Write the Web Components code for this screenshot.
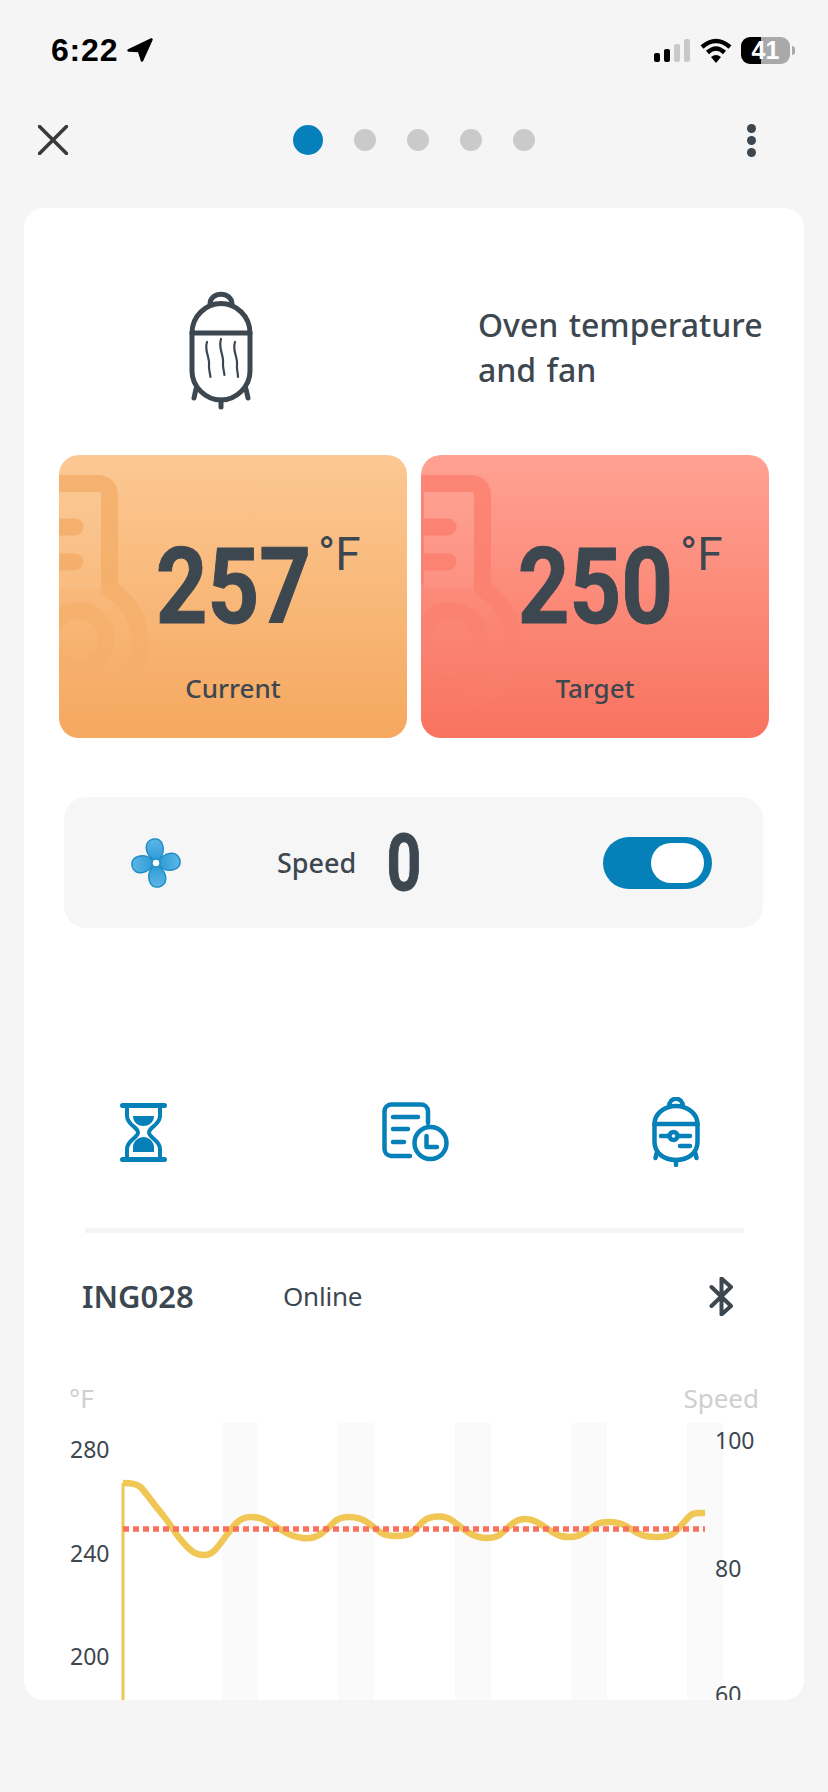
<!DOCTYPE html>
<html lang="en">
<head>
<meta charset="utf-8">
<title>Oven temperature and fan</title>
<style>
    html, body { margin: 0; padding: 0; background: #f5f5f5; }
    body { width: 828px; height: 1792px; overflow: hidden; font-family: "Noto Sans", "Liberation Sans", sans-serif; color: #3d4750; }
</style>
</head>
<body>
<status-bar></status-bar>
<top-nav></top-nav>
<oven-card>
    <oven-summary>Oven temperature and fan</oven-summary>
    <temp-row>
        <temp-tile value="257" tone="orange">Current</temp-tile>
        <temp-tile value="250" tone="red">Target</temp-tile>
    </temp-row>
    <fan-panel speed="0"></fan-panel>
    <action-icons></action-icons>
    <device-row name="ING028" state="Online"></device-row>
    <temp-chart></temp-chart>
</oven-card>

<script>
class StatusBar extends HTMLElement {
    constructor() {
        super();
        this.shadowDOM = this.attachShadow({mode: "open"});
    }

    connectedCallback() {
        this.shadowDOM.innerHTML = `
            <style>
                :host {
                    display: flex;
                    align-items: center;
                    height: 100px;
                    padding: 0 33px 0 51px;
                    box-sizing: border-box;
                    color: #000;
                }
                .time {
                    font: 700 32px/1 "Liberation Sans", sans-serif;
                    margin-right: 9px;
                    letter-spacing: 0.8px;
                }
                .right {
                    margin-left: auto;
                    display: flex;
                    align-items: center;
                }
                .signal { display: flex; align-items: flex-end; gap: 3.5px; height: 24px; margin-right: 10px; }
                .signal i { display: block; width: 6.5px; border-radius: 2px; background: #c9c9c9; }
                .signal i:nth-child(1) { height: 9px; background: #000; }
                .signal i:nth-child(2) { height: 13px; background: #000; }
                .signal i:nth-child(3) { height: 18px; }
                .signal i:nth-child(4) { height: 23px; }
                .battery {
                    width: 49px;
                    height: 27px;
                    margin-left: 9px;
                    border-radius: 9px;
                    background: linear-gradient(90deg, #000 41%, #a9a9a9 41%);
                    color: #fff;
                    font: 700 25px/27px "Liberation Sans", sans-serif;
                    text-align: center;
                }
                .nub { width: 3px; height: 9px; margin-left: 2px; border-radius: 0 3px 3px 0; background: #a9a9a9; }
                svg { display: block; }
            </style>
            <span class="time">6:22</span>
            <svg width="26" height="24" viewBox="0 0 26 24"><path d="M1.500 12.500 L24.500 1.500 L15 22.500 L12 13 Z" fill="#000" stroke="#000" stroke-width="2.500" stroke-linejoin="round"/></svg>
            <div class="right">
                <div class="signal"><i></i><i></i><i></i><i></i></div>
                <svg width="32" height="25" viewBox="0 0 32 25">
                    <path d="M2 9 Q16 -3 30 9" fill="none" stroke="#000" stroke-width="4.500"/>
                    <path d="M7.500 14.500 Q16 6.500 24.500 14.500" fill="none" stroke="#000" stroke-width="4.500"/>
                    <path d="M11 19 L16 25 L21 19 Q16 15 11 19 Z" fill="#000"/>
                </svg>
                <div class="battery">41</div>
                <div class="nub"></div>
            </div>
        `;
    }
}

class TopNav extends HTMLElement {
    constructor() {
        super();
        this.shadowDOM = this.attachShadow({mode: "open"});
    }

    connectedCallback() {
        this.shadowDOM.innerHTML = `
            <style>
                :host {
                    display: flex;
                    align-items: center;
                    height: 80px;
                    padding-left: 38px;
                    margin-bottom: 28px;
                    box-sizing: border-box;
                }
                svg { display: block; }
                .dots { display: flex; align-items: center; gap: 31px; margin-left: 225px; }
                .dots i { display: block; width: 22px; height: 22px; border-radius: 50%; background: #cacaca; }
                .dots i.on { width: 30px; height: 30px; background: #0580bb; }
                .more { display: flex; flex-direction: column; gap: 3px; margin-left: 212px; }
                .more i { display: block; width: 9px; height: 9px; border-radius: 50%; background: #3d4750; }
            </style>
            <svg width="30" height="30" viewBox="0 0 30 30"><path d="M1.500 1.500 L28.500 28.500 M28.500 1.500 L1.500 28.500" stroke="#3a3a3a" stroke-width="3.600" stroke-linecap="round"/></svg>
            <div class="dots"><i class="on"></i><i></i><i></i><i></i><i></i></div>
            <div class="more"><i></i><i></i><i></i></div>
        `;
    }
}

class OvenCard extends HTMLElement {
    constructor() {
        super();
        this.shadowDOM = this.attachShadow({mode: "open"});
    }

    connectedCallback() {
        this.shadowDOM.innerHTML = `
            <style>
                :host {
                    display: block;
                    height: 1492px;
                    margin: 0 24px;
                    background: #fff;
                    border-radius: 20px;
                    overflow: hidden;
                }
            </style>
            <slot></slot>
        `;
    }
}

class OvenSummary extends HTMLElement {
    constructor() {
        super();
        this.shadowDOM = this.attachShadow({mode: "open"});
    }

    connectedCallback() {
        this.shadowDOM.innerHTML = `
            <style>
                :host {
                    display: flex;
                    height: 247px;
                    box-sizing: border-box;
                    padding: 81px 0 0 164px;
                }
                svg { display: block; flex: none; }
                .title {
                    width: 310px;
                    margin: 13px 0 0 224px;
                    font: 500 32px/45px "Noto Sans", sans-serif;
                    word-spacing: 2px;
                    color: #3d4750;
                }
            </style>
            <svg width="66" height="121" viewBox="0 0 66 121" fill="none" stroke="#3d4750" stroke-width="5" stroke-linecap="round" stroke-linejoin="round">
                <path d="M22 15 C22 2 44 2 44 15"/>
                <path d="M4 44 C4 27 18 14.500 33 14.500 S62 27 62 44 V82 C62 98 48 111 33 111 S4 98 4 82 Z"/>
                <path d="M4 44 H62"/>
                <path d="M8 100 L6 109 M33 111 V118 M58 100 L60 109"/>
                <path d="M19 53 C16 62 22 68 21 76 C20.500 80 22 84 22.500 88 M33 50 C30 60 36 66 35 74 C34.500 78 36 82 36.500 86 M47 53 C44 62 50 68 49 76 C48.500 80 50 84 50 88" stroke-width="2.200"/>
            </svg>
            <div class="title"><slot></slot></div>
        `;
    }
}

class TempRow extends HTMLElement {
    constructor() {
        super();
        this.shadowDOM = this.attachShadow({mode: "open"});
    }

    connectedCallback() {
        this.shadowDOM.innerHTML = `
            <style>
                :host {
                    display: flex;
                    gap: 14px;
                    padding-left: 35px;
                }
            </style>
            <slot></slot>
        `;
    }
}

class TempTile extends HTMLElement {
    constructor() {
        super();
        this.shadowDOM = this.attachShadow({mode: "open"});
    }

    connectedCallback() {
        const red = this.getAttribute("tone") === "red";
        const tint = red ? "#fb7f6e" : "#f4ad68";
        const gradient = red ? "fade-red" : "fade-orange";
        this.shadowDOM.innerHTML = `
            <style>
                :host {
                    display: flex;
                    flex-direction: column;
                    align-items: center;
                    position: relative;
                    width: 348px;
                    height: 283px;
                    box-sizing: border-box;
                    padding-top: 95px;
                    border-radius: 20px;
                    overflow: hidden;
                    background: ${red ? "linear-gradient(180deg, #ffa193, #f8735f)" : "linear-gradient(180deg, #fcc893, #f5a85f)"};
                }
                .mark {
                    position: absolute;
                    left: ${red ? 11 : 0}px;
                    top: 0;
                    overflow: visible;
                }
                .value {
                    position: relative;
                    width: 150px;
                    height: 75px;
                    display: flex;
                    justify-content: center;
                }
                .digits {
                    flex: none;
                    font: 700 105px/75px Roboto, sans-serif;
                    color: #3d4750;
                    -webkit-text-stroke: 1px #3d4750;
                    transform: scaleX(0.86);
                }
                .unit {
                    position: absolute;
                    left: 160px;
                    top: -18px;
                    font: 400 46px/45px Roboto, sans-serif;
                    color: #3d4750;
                    white-space: nowrap;
                }
                .label {
                    position: relative;
                    margin-top: 45px;
                    font: 500 26px/36px "Noto Sans", sans-serif;
                    color: #3d4750;
                }
            </style>
            <svg class="mark" width="120" height="283" viewBox="0 0 120 283" fill="none">
                <defs>
                    <linearGradient id="${gradient}" gradientUnits="userSpaceOnUse" x1="0" y1="120" x2="0" y2="275">
                        <stop offset="0" stop-color="${tint}" stop-opacity="0.8"/>
                        <stop offset="0.5" stop-color="${tint}" stop-opacity="0.45"/>
                        <stop offset="1" stop-color="${tint}" stop-opacity="0"/>
                    </linearGradient>
                </defs>
                <rect x="-8" y="37" width="50" height="96" fill="#fff" opacity="0.05"/>
                <g stroke="url(#${gradient})">
                    <path d="M-20 28.500 H38 Q50.500 28.500 50.500 41 V134 A62 62 0 0 1 19 249.500 H-20" stroke-width="17"/>
                    <path d="M-20 37 V130" stroke-width="24"/>
                    <circle cx="19" cy="184" r="28.500" stroke-width="17"/>
                </g>
                <path d="M-20 72 H16 M-20 107 H16" stroke="${tint}" stroke-opacity="0.85" stroke-width="17" stroke-linecap="round"/>
            </svg>
            <div class="value">
                <span class="digits">${this.getAttribute("value")}</span>
                <span class="unit">°F</span>
            </div>
            <div class="label"><slot></slot></div>
        `;
    }
}

class FanPanel extends HTMLElement {
    constructor() {
        super();
        this.shadowDOM = this.attachShadow({mode: "open"});
    }

    connectedCallback() {
        const petal = "M-1 -3 C-10 -8 -12 -21 -2 -24 C10 -26 11 -10 3 -3 Z";
        this.shadowDOM.innerHTML = `
            <style>
                :host {
                    display: flex;
                    align-items: center;
                    width: 699px;
                    height: 131px;
                    margin: 59px 0 0 40px;
                    box-sizing: border-box;
                    padding-left: 66px;
                    background: #f6f6f6;
                    border-radius: 22px;
                }
                svg { display: block; flex: none; }
                .name {
                    width: 82px;
                    margin-left: 95px;
                    font: 500 27px/36px "Noto Sans", sans-serif;
                    color: #3d4750;
                }
                .speed {
                    margin-left: 22px;
                    width: 46px;
                    text-align: center;
                    font: 700 80px/60px Roboto, sans-serif;
                    color: #3d4750;
                    -webkit-text-stroke: 1px #3d4750;
                    transform: scaleX(0.76);
                }
                .toggle {
                    display: flex;
                    justify-content: flex-end;
                    align-items: center;
                    width: 109px;
                    height: 52px;
                    margin-left: 176px;
                    padding-right: 8px;
                    box-sizing: border-box;
                    border-radius: 26px;
                    background: #0580b8;
                }
                .toggle i {
                    display: block;
                    width: 53px;
                    height: 40px;
                    border-radius: 20px;
                    background: #fff;
                }
            </style>
            <svg width="52" height="50" viewBox="-26 -25 52 50">
                <defs>
                    <linearGradient id="petal" x1="0" y1="0" x2="0" y2="1">
                        <stop offset="0" stop-color="#5cb6e6"/>
                        <stop offset="1" stop-color="#2f9bd6"/>
                    </linearGradient>
                </defs>
                <g fill="url(#petal)" stroke="#1e8cc6" stroke-width="1.400">
                    <path d="${petal}" transform="rotate(-4)"/>
                    <path d="${petal}" transform="rotate(86)"/>
                    <path d="${petal}" transform="rotate(176)"/>
                    <path d="${petal}" transform="rotate(266)"/>
                </g>
                <circle r="4" fill="#fff" stroke="#1e8cc6" stroke-width="1.400"/>
            </svg>
            <span class="name">Speed</span>
            <span class="speed">${this.getAttribute("speed")}</span>
            <div class="toggle"><i></i></div>
        `;
    }
}

class ActionIcons extends HTMLElement {
    constructor() {
        super();
        this.shadowDOM = this.attachShadow({mode: "open"});
    }

    connectedCallback() {
        this.shadowDOM.innerHTML = `
            <style>
                :host {
                    display: flex;
                    align-items: center;
                    height: 70px;
                    margin-top: 169px;
                    padding-left: 96px;
                }
                svg { display: block; flex: none; }
                .doc { margin-left: 215px; }
                .oven { margin-left: 203px; }
            </style>
            <svg width="47" height="59" viewBox="0 0 47 59" fill="none" stroke="#0580b8" stroke-width="4" stroke-linecap="round">
                <path d="M2.500 2.500 H44.500 M2.500 56.500 H44.500" stroke-width="5"/>
                <path d="M7 4 V13 C7 22 18 24 18 29.500 C18 35 7 37 7 46 V55"/>
                <path d="M40 4 V13 C40 22 29 24 29 29.500 C29 35 40 37 40 46 V55"/>
                <path d="M13 13 H34 C34 20 28 23 23.500 23 C19 23 13 20 13 13 Z M13 49 V44 C13 38 19 34 23.500 34 S34 38 34 44 V49 Z" fill="#0580b8" stroke="none"/>
            </svg>
            <svg class="doc" width="67" height="60" viewBox="0 0 67 60" fill="none" stroke="#0580b8" stroke-width="4.500" stroke-linecap="round" stroke-linejoin="round">
                <path d="M28 54 H9 A7 7 0 0 1 2.500 47 V9 A7 7 0 0 1 9 2.500 H39 A7 7 0 0 1 46 9 V21"/>
                <path d="M11 15 H36 M11 27 H26 M11 40 H22"/>
                <circle cx="48.500" cy="41" r="16"/>
                <path d="M44.500 34 V45 H55"/>
            </svg>
            <svg class="oven" width="48" height="70" viewBox="0 0 48 70" fill="none" stroke="#0580b8" stroke-width="4.500" stroke-linecap="round" stroke-linejoin="round">
                <path d="M17 10 C17 -1 31 -1 31 10"/>
                <path d="M2.500 27 C2.500 17 12 9 24 9 S45.500 17 45.500 27 V45 C45.500 56 36 63 24 63 S2.500 56 2.500 45 Z"/>
                <path d="M2.500 27 H45.500"/>
                <path d="M5 55 L3.500 61 M24 63 V68 M43 55 L44.500 61"/>
                <path d="M9 39 H17 M26 39 H38 M28 49 H38"/>
                <circle cx="21.500" cy="39" r="4"/>
            </svg>
        `;
    }
}

class DeviceRow extends HTMLElement {
    constructor() {
        super();
        this.shadowDOM = this.attachShadow({mode: "open"});
    }

    connectedCallback() {
        this.shadowDOM.innerHTML = `
            <style>
                :host {
                    display: block;
                    padding-top: 61px;
                }
                .rule { height: 5px; margin: 0 60px 0 61px; background: #f5f5f5; }
                .row {
                    display: flex;
                    align-items: center;
                    height: 39px;
                    margin-top: 44px;
                    padding: 0 70px 0 58px;
                    color: #3d4750;
                }
                .name { width: 201px; font: 600 31px/39px "Noto Sans", sans-serif; }
                .state { font: 400 26px/39px "Noto Sans", sans-serif; letter-spacing: -0.2px; }
                svg { display: block; margin-left: auto; }
            </style>
            <div class="rule"></div>
            <div class="row">
                <span class="name">${this.getAttribute("name")}</span>
                <span class="state">${this.getAttribute("state")}</span>
                <svg width="25" height="39" viewBox="0 0 25 39" fill="none" stroke="#3d4750" stroke-width="4" stroke-linejoin="round" stroke-linecap="round">
                    <path d="M2.500 10 L22 29 L12.500 37.500 V1.500 L22 10 L2.500 29"/>
                </svg>
            </div>
        `;
    }
}

class TempChart extends HTMLElement {
    constructor() {
        super();
        this.shadowDOM = this.attachShadow({mode: "open"});
    }

    connectedCallback() {
        const points = [
            [123,1483],[137,1483],[145,1492],[157,1508],[167,1520],[178,1537],[190,1550],[198,1555],[210,1555],[218,1547],
            [230,1530],[242,1517],[260,1517],[273,1525],[293,1537],[313,1539],[327,1530],[338,1517],[360,1517],[375,1528],
            [385,1536],[408,1536],[417,1528],[427,1517],[447,1516],[460,1527],[477,1538],[497,1538],[507,1528],[518,1519],
            [533,1519],[552,1532],[562,1537],[578,1537],[593,1527],[600,1522],[620,1522],[637,1533],[647,1537],[670,1537],
            [680,1527],[690,1515],[695,1513],[705,1513]
        ];
        // round the corners: curve through the midpoint of each segment
        let line = `M${points[0].join(" ")}`;
        for (let i = 1; i < points.length - 1; i++) {
            const midX = (points[i][0] + points[i + 1][0]) / 2;
            const midY = (points[i][1] + points[i + 1][1]) / 2;
            line += ` Q${points[i].join(" ")} ${midX} ${midY}`;
        }
        line += ` L${points[points.length - 1].join(" ")}`;

        const bands = [222, 338, 455, 571, 687];
        this.shadowDOM.innerHTML = `
            <style>
                :host {
                    display: block;
                    height: 320px;
                    margin-top: 64px;
                }
                svg { display: block; }
                text { font-family: "Noto Sans", sans-serif; font-size: 23px; fill: #3d4750; }
                text.head { font-size: 26px; fill: #cfcfcf; }
            </style>
            <svg width="780" height="320" viewBox="24 1380 780 320">
                ${bands.map(x => `<rect x="${x}" y="1423" width="36" height="277" fill="#fafafa"/>`).join("")}
                <text class="head" x="69" y="1408">°F</text>
                <text class="head" x="759" y="1408" text-anchor="end">Speed</text>
                <text x="70" y="1458">280</text>
                <text x="70" y="1562">240</text>
                <text x="70" y="1665">200</text>
                <text x="715" y="1449">100</text>
                <text x="715" y="1577">80</text>
                <text x="715" y="1703">60</text>
                <path d="M123 1700 V1483" stroke="#f0c654" stroke-width="3" fill="none"/>
                <path d="${line}" fill="none" stroke="#f0c654" stroke-width="6.500" stroke-linejoin="round"/>
                <path d="M123 1529 H705" stroke="#f9705f" stroke-width="5.500" stroke-dasharray="6 4" fill="none"/>
            </svg>
        `;
    }
}

customElements.define("status-bar", StatusBar);
customElements.define("top-nav", TopNav);
customElements.define("oven-card", OvenCard);
customElements.define("oven-summary", OvenSummary);
customElements.define("temp-row", TempRow);
customElements.define("temp-tile", TempTile);
customElements.define("fan-panel", FanPanel);
customElements.define("action-icons", ActionIcons);
customElements.define("device-row", DeviceRow);
customElements.define("temp-chart", TempChart);
</script>
</body>
</html>
